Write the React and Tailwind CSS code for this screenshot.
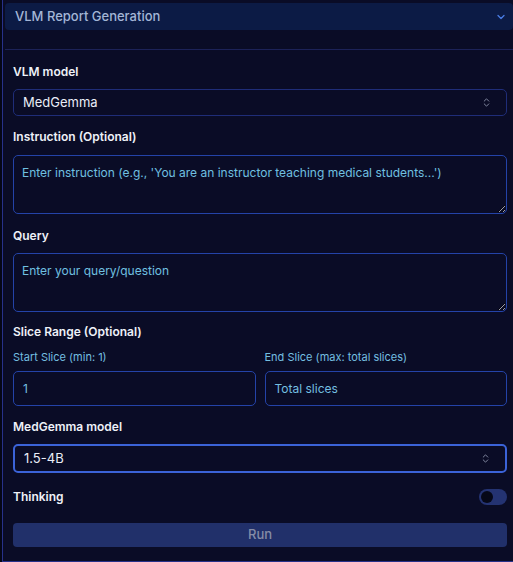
import { ChevronDown, ChevronsUpDown } from "lucide-react";

function Label({ children, className = "" }) {
  return (
    <div className={`h-4 text-[12px] leading-4 font-semibold text-[#eef1f8] ${className}`}>
      {children}
    </div>
  );
}

function SelectBox({ value, focused }) {
  return (
    <div
      className={`flex items-center justify-between rounded-[5px] bg-[#0a0c26] pl-[9px] pr-[14px] text-[13px] text-[#e9edf7] ${
        focused
          ? "h-[29px] border-2 border-[#3b63d8]"
          : "h-[27px] border border-[#1f2d78]"
      }`}
    >
      <span>{value}</span>
      <ChevronsUpDown size={11} strokeWidth={2} className="text-[#8a90a8]" />
    </div>
  );
}

function Area({ placeholder }) {
  return (
    <textarea
      placeholder={placeholder}
      className="block h-[59px] w-full rounded-[5px] border border-[#2443a8] bg-[#0a0c26] px-2 py-[9px] text-[12px] leading-4 text-[#e9edf7] outline-none placeholder:text-[#70c0e0]"
    />
  );
}

function Field({ label, value }) {
  return (
    <div className="flex-1">
      <div className="h-[14px] text-[11px] leading-[14px] text-[#74bfe0]">{label}</div>
      <div className="mt-[7px] flex h-[35px] items-center rounded-[5px] border border-[#2443a8] px-[9px] text-[12px] text-[#74bfe0]">
        {value}
      </div>
    </div>
  );
}

export default function App() {
  return (
    <div className="h-[562px] overflow-hidden bg-[#050716] pl-[2px] font-['Inter',sans-serif]">
      <div className="h-[562px] border-b border-l border-[#27318a] bg-[#0a0c26] pl-[2px] pt-[3px]">
        <div className="flex h-[27px] items-center justify-between rounded-[4px] bg-[#0c1b45] pl-[10px] pr-[6px]">
          <span className="text-[13px] font-medium text-[#a3b6d6]">VLM Report Generation</span>
          <ChevronDown size={12} strokeWidth={2.5} className="text-[#4a7de6]" />
        </div>
        <div className="mt-[19px] border-t border-[#1c2258] pl-[8px] pr-[6px] pt-[14px]">
          <Label>VLM model</Label>
          <div className="mt-[9px]">
            <SelectBox value="MedGemma" />
          </div>

          <Label className="mt-[13px]">Instruction (Optional)</Label>
          <div className="mt-[10px]">
            <Area placeholder="Enter instruction (e.g., 'You are an instructor teaching medical students...')" />
          </div>

          <Label className="mt-[14px]">Query</Label>
          <div className="mt-[9px]">
            <Area placeholder="Enter your query/question" />
          </div>

          <Label className="mt-[12px]">Slice Range (Optional)</Label>
          <div className="mt-[10px] flex gap-[9px]">
            <Field label="Start Slice (min: 1)" value="1" />
            <Field label="End Slice (max: total slices)" value="Total slices" />
          </div>

          <Label className="mt-[13px]">MedGemma model</Label>
          <div className="mt-[9px]">
            <SelectBox value="1.5-4B" focused />
          </div>

          <div className="mt-[16px] flex items-center justify-between">
            <Label>Thinking</Label>
            <div className="flex h-4 w-7 items-center rounded-full bg-[#243372] px-[2px]">
              <div className="h-3 w-3 rounded-full bg-[#060818]" />
            </div>
          </div>

          <button className="mt-[18px] flex h-6 w-full items-center justify-center rounded-[4px] bg-[#21306a] text-[13px] font-medium text-[#858ca6]">
            Run
          </button>
        </div>
      </div>
    </div>
  );
}
